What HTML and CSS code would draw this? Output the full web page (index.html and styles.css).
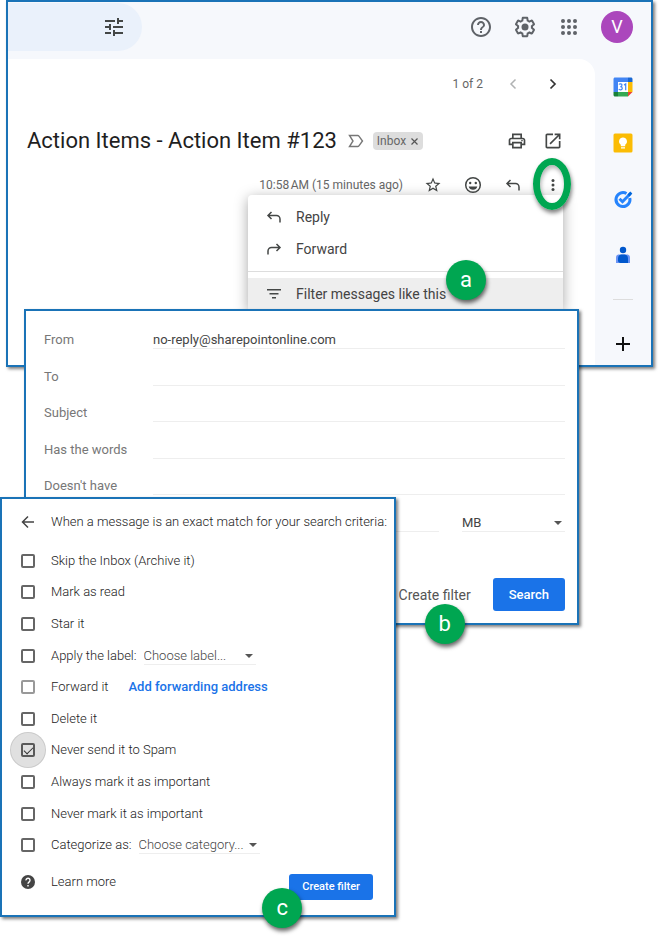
FILE: index.html
```html
<!DOCTYPE html>
<html lang="en">
<head>
<meta charset="UTF-8">
<meta name="viewport" content="width=device-width, initial-scale=1.0">
<title>Create a mail filter</title>
<link rel="stylesheet" href="styles.css">
</head>
<body>
<section class="panel mail">
    <header class="topbar">
        <div class="search">
            <button class="icon-button" aria-label="Search options">
                <svg width="24" height="24" viewBox="0 0 24 24" fill="#444746"><path d="M3 17v2h6v-2H3zM3 5v2h10V5H3zm10 16v-2h8v-2h-8v-2h-2v6h2zM7 9v2H3v2h4v2h2V9H7zm14 4v-2H11v2h10zm-6-4h2V7h4V5h-4V3h-2v6z"/></svg>
            </button>
        </div>
        <div class="tools">
            <button class="icon-button" aria-label="Support">
                <svg width="24" height="24" viewBox="0 0 24 24" fill="#5f6368"><path d="M11 18h2v-2h-2v2zm1-16C6.48 2 2 6.48 2 12s4.480 10 10 10 10-4.480 10-10S17.520 2 12 2zm0 18c-4.410 0-8-3.590-8-8s3.590-8 8-8 8 3.590 8 8-3.590 8-8 8zm0-14c-2.210 0-4 1.790-4 4h2c0-1.100.9-2 2-2s2 .9 2 2c0 2-3 1.750-3 5h2c0-2.250 3-2.500 3-5 0-2.210-1.790-4-4-4z"/></svg>
            </button>
            <button class="icon-button" aria-label="Settings">
                <svg width="24" height="24" viewBox="0 0 24 24" fill="#5f6368"><path d="M13.850 22.250h-3.700c-.74 0-1.360-.54-1.450-1.270l-.27-1.890c-.27-.14-.53-.29-.79-.46l-1.800.72c-.7.26-1.470-.03-1.810-.65L2.200 15.530c-.35-.66-.2-1.440.36-1.880l1.530-1.190c-.01-.15-.02-.3-.02-.46 0-.15.01-.31.02-.46l-1.520-1.190c-.59-.45-.74-1.260-.37-1.880l1.850-3.190c.34-.62 1.110-.9 1.790-.63l1.810.73c.26-.17.52-.32.78-.46l.27-1.910c.09-.7.71-1.250 1.440-1.250h3.700c.74 0 1.360.54 1.450 1.270l.27 1.890c.27.14.53.29.79.46l1.800-.72c.71-.26 1.480.03 1.820.65l1.840 3.180c.36.66.2 1.440-.36 1.880l-1.520 1.190c.01.15.02.3.02.46s-.01.31-.02.46l1.520 1.190c.56.45.72 1.230.37 1.860l-1.860 3.220c-.34.62-1.110.9-1.800.63l-1.800-.72c-.26.17-.52.32-.78.46l-.27 1.910c-.1.68-.72 1.220-1.460 1.220zm-3.230-2h2.760l.37-2.550.53-.22c.44-.18.88-.44 1.340-.78l.45-.34 2.380.96 1.380-2.400-2.030-1.580.07-.56c.03-.26.06-.51.06-.78s-.03-.53-.06-.78l-.07-.56 2.030-1.580-1.390-2.400-2.390.96-.45-.35c-.42-.32-.87-.58-1.330-.77l-.52-.22-.37-2.550h-2.760l-.37 2.550-.53.21c-.44.19-.88.44-1.340.79l-.45.33-2.380-.95-1.390 2.390 2.030 1.580-.07.56a7 7 0 0 0-.06.79c0 .26.02.53.06.78l.07.56-2.030 1.580 1.380 2.400 2.390-.96.45.35c.43.33.86.58 1.330.77l.53.22z"/><circle cx="12" cy="12" r="3.500"/></svg>
            </button>
            <button class="icon-button" aria-label="Apps">
                <svg width="24" height="24" viewBox="0 0 24 24" fill="#5f6368"><g id="dots"><circle cx="6" cy="6" r="2"/><circle cx="12" cy="6" r="2"/><circle cx="18" cy="6" r="2"/></g><use href="#dots" y="6"/><use href="#dots" y="12"/></svg>
            </button>
            <button class="avatar" aria-label="Account">V</button>
        </div>
    </header>
    <div class="mail-body">
        <main class="message">
            <div class="row pager">
                <span class="muted">1 of 2</span>
                <button class="icon-button wide" aria-label="Newer">
                    <svg width="16" height="16" viewBox="0 0 16 16" fill="none" stroke="#b0b2b3" stroke-width="1.500"><path d="M10.500 3.500 6 8l4.500 4.500"/></svg>
                </button>
                <button class="icon-button wide" aria-label="Older">
                    <svg width="16" height="16" viewBox="0 0 16 16" fill="none" stroke="#333" stroke-width="1.700"><path d="m5.500 3.500 4.500 4.500-4.500 4.500"/></svg>
                </button>
            </div>
            <div class="row subject">
                <h1>Action Items - Action Item #123</h1>
                <svg width="16" height="14" viewBox="0 0 16 14" fill="none" stroke="#777" stroke-width="1.400"><path d="M1.500 1.500h8.200c.5 0 .9.200 1.200.6L14.500 7l-3.600 4.900c-.3.4-.7.600-1.200.6H1.500L5 7z"/></svg>
                <span class="chip">Inbox <button aria-label="Remove label"><svg width="7" height="7" viewBox="0 0 7 7" stroke="#555" stroke-width="1.200"><path d="m.5.5 6 6m0-6-6 6"/></svg></button></span>
                <div class="subject-tools">
                    <button class="icon-button" aria-label="Print">
                        <svg width="20" height="20" viewBox="0 0 24 24" fill="#444746"><path d="M19 8h-1V3H6v5H5c-1.660 0-3 1.340-3 3v6h4v4h12v-4h4v-6c0-1.660-1.340-3-3-3zM8 5h8v3H8V5zm8 12v2H8v-4h8v2zm2-2v-2H6v2H4v-4c0-.55.45-1 1-1h14c.55 0 1 .45 1 1v4h-2z"/><circle cx="18" cy="11.500" r="1"/></svg>
                    </button>
                    <button class="icon-button" aria-label="Open in new window">
                        <svg width="20" height="20" viewBox="0 0 24 24" fill="#444746"><path d="M19 19H5V5h7V3H5c-1.110 0-2 .9-2 2v14c0 1.100.89 2 2 2h14c1.100 0 2-.9 2-2v-7h-2v7zM14 3v2h3.590l-9.830 9.830 1.410 1.410L19 6.410V10h2V3h-7z"/></svg>
                    </button>
                </div>
            </div>
            <div class="row actions">
                <span class="muted">10:58&#8239;AM (15 minutes ago)</span>
                <button class="icon-button wide" aria-label="Star">
                    <svg width="18" height="18" viewBox="0 0 24 24" fill="#444746"><path d="m22 9.240-7.190-.62L12 2 9.190 8.630 2 9.240l5.460 4.730L5.820 21 12 17.270 18.180 21l-1.630-7.030L22 9.240zM12 15.400l-3.760 2.270 1-4.280-3.320-2.880 4.380-.38L12 6.100l1.710 4.040 4.380.38-3.320 2.880 1 4.280L12 15.400z"/></svg>
                </button>
                <button class="icon-button wide" aria-label="Add reaction">
                    <svg width="20" height="20" viewBox="0 0 20 20" fill="#444746"><circle cx="10" cy="10" r="7.300" fill="none" stroke="#444746" stroke-width="1.500"/><circle cx="7.200" cy="8" r="1.200"/><circle cx="12.800" cy="8" r="1.200"/><path d="M5.700 11.500h8.600a4.500 4.500 0 0 1-8.600 0z"/></svg>
                </button>
                <button class="icon-button wide" aria-label="Reply">
                    <svg width="16" height="16" viewBox="0 0 16 16" fill="none" stroke="#444746" stroke-width="1.500"><path d="M5.500 3 2 6.500 5.500 10M2 6.500h8.500a3.500 3.500 0 0 1 3.500 3.500v3.500"/></svg>
                </button>
                <div class="more">
                    <button class="icon-button wide" aria-label="More">
                        <svg width="16" height="16" viewBox="0 0 16 16" fill="#444746"><circle cx="8" cy="3.500" r="1.500"/><circle cx="8" cy="8" r="1.500"/><circle cx="8" cy="12.500" r="1.500"/></svg>
                    </button>
                    <span class="ring"></span>
                </div>
            </div>
            <div class="menu">
                <button class="menu-item">
                    <svg width="16" height="16" viewBox="0 0 16 16" fill="none" stroke="#444746" stroke-width="1.500"><path d="M5.500 3 2 6.500 5.500 10M2 6.500h8.500a3.500 3.500 0 0 1 3.500 3.500v3.500"/></svg>
                    Reply
                </button>
                <button class="menu-item">
                    <svg width="16" height="16" viewBox="0 0 16 16" fill="none" stroke="#444746" stroke-width="1.500"><path d="M10.500 3 14 6.500 10.500 10M14 6.500H5.500A3.500 3.500 0 0 0 2 10v3.500"/></svg>
                    Forward
                </button>
                <hr>
                <button class="menu-item selected">
                    <svg width="16" height="16" viewBox="0 0 16 16" fill="none" stroke="#444746" stroke-width="1.500"><path d="M1 3.750h14M3.500 7.750h9M6 11.750h4"/></svg>
                    Filter messages like this
                </button>
                <span class="badge badge-a">a</span>
            </div>
        </main>
        <aside class="rail">
            <button class="icon-button" aria-label="Calendar">
                <svg width="20" height="20" viewBox="0 0 20 20"><path fill="#4285f4" d="M2 .5h13V5H5v10H.5V2C.5 1.200 1.200.5 2 .5z"/><path fill="#1967d2" d="M15 .5h3c.8 0 1.500.7 1.500 1.500v3H15z"/><path fill="#fbbc04" d="M15 5h4.500v10H15z"/><path fill="#34a853" d="M5 15h10v4.500H5z"/><path fill="#188038" d="M.5 15H5v4.500H2c-.8 0-1.500-.7-1.500-1.500z"/><path fill="#ea4335" d="M15 15h4.500L15 19.500z"/><path fill="#fff" d="M5 5h10v10H5z"/><path fill="none" stroke="#4285f4" stroke-width="1.200" d="M6 7.500c.6-1 3-1 3 .6 0 1.100-1 1.500-1.700 1.500.9 0 2 .5 2 1.700 0 1.800-2.700 2-3.500.7M11 8l1.700-1.100v6.300"/></svg>
            </button>
            <button class="icon-button" aria-label="Keep">
                <svg width="20" height="20" viewBox="0 0 20 20"><rect x=".5" y=".5" width="19" height="19" rx="1.500" fill="#fbbc04"/><path fill="#fff" d="M10 4.500a4 4 0 0 0-2.200 7.300V13.300h4.400v-1.500A4 4 0 0 0 10 4.500zM8 14.200h4v1.400H8z"/></svg>
            </button>
            <button class="icon-button" aria-label="Tasks">
                <svg width="20" height="20" viewBox="0 0 20 20" fill="none"><path stroke="#2684fc" stroke-width="3" d="M13.500 4.500A7 7 0 1 0 16.800 9"/><path stroke="#2684fc" stroke-width="3" d="m6.500 9.700 3 3 8-8.200"/><path fill="#0066da" d="m14.500 5.400 2.800-3 2 2-2.800 3z"/></svg>
            </button>
            <button class="icon-button" aria-label="Contacts">
                <svg width="20" height="20" viewBox="0 0 20 20"><circle cx="10" cy="5" r="3.200" fill="#0057cc"/><path fill="#6b94f4" d="M6 9.500h8c1.900 0 3 1.200 3 3V18H3v-5.500c0-1.800 1.100-3 3-3z"/><path fill="#0057cc" d="M9 9.500h2c2.500 0 4 1.500 4 4V18H7.500C6 18 5 17 5 15.500v-2c0-2.500 1.500-4 4-4z"/></svg>
            </button>
            <hr>
            <button class="icon-button add" aria-label="Get add-ons">
                <svg width="16" height="16" viewBox="0 0 16 16" stroke="#111" stroke-width="2"><path d="M8 1v14M1 8h14"/></svg>
            </button>
        </aside>
    </div>
</section>

<form class="panel criteria">
    <div class="fields">
        <div class="field"><label for="from">From</label><input type="text" id="from" value="no-reply@sharepointonline.com"></div>
        <div class="field"><label for="to">To</label><input type="text" id="to"></div>
        <div class="field"><label for="subject">Subject</label><input type="text" id="subject"></div>
        <div class="field"><label for="words">Has the words</label><input type="text" id="words"></div>
        <div class="field"><label for="without">Doesn't have</label><input type="text" id="without"></div>
        <div class="field size">
            <input type="text" aria-label="Size">
            <span class="dropdown unit"><select aria-label="Size unit"><option>MB</option></select></span>
        </div>
    </div>
    <div class="criteria-footer">
        <div class="marked">
            <button type="button" class="text-button">Create filter</button>
            <span class="badge badge-b">b</span>
        </div>
        <button type="button" class="primary">Search</button>
    </div>
</form>

<form class="panel options">
    <div class="options-head">
        <button type="button" class="icon-button" aria-label="Back">
            <svg width="14" height="14" viewBox="0 0 14 14" fill="none" stroke="#444" stroke-width="1.500"><path d="M7 1.500 1.500 7 7 12.500M1.500 7H13"/></svg>
        </button>
        <span>When a message is an exact match for your search criteria:</span>
    </div>
    <div class="checks">
        <div class="check"><input type="checkbox" id="skip"><label for="skip">Skip the Inbox (Archive it)</label></div>
        <div class="check"><input type="checkbox" id="read"><label for="read">Mark as read</label></div>
        <div class="check"><input type="checkbox" id="star"><label for="star">Star it</label></div>
        <div class="check">
            <input type="checkbox" id="apply"><label for="apply">Apply the label:</label>
            <span class="dropdown label-select"><select aria-label="Label"><option>Choose label...</option></select></span>
        </div>
        <div class="check">
            <input type="checkbox" id="forward" disabled><label for="forward">Forward it</label>
            <a href="#">Add forwarding address</a>
        </div>
        <div class="check"><input type="checkbox" id="delete"><label for="delete">Delete it</label></div>
        <div class="check active"><input type="checkbox" id="spam" checked><label for="spam">Never send it to Spam</label></div>
        <div class="check"><input type="checkbox" id="always"><label for="always">Always mark it as important</label></div>
        <div class="check"><input type="checkbox" id="never"><label for="never">Never mark it as important</label></div>
        <div class="check">
            <input type="checkbox" id="category"><label for="category">Categorize as:</label>
            <span class="dropdown category-select"><select aria-label="Category"><option>Choose category...</option></select></span>
        </div>
    </div>
    <div class="options-footer">
        <a class="learn" href="#">
            <svg width="14" height="14" viewBox="0 0 14 14"><circle cx="7" cy="7" r="7" fill="#444"/><path d="M5 5.400a2 2 0 1 1 3.200 1.500C7.400 7.500 7 7.900 7 8.800M7 10v1.600" fill="none" stroke="#fff" stroke-width="1.400"/></svg>
            Learn more
        </a>
        <div class="marked">
            <button type="button" class="primary small">Create filter</button>
            <span class="badge badge-c">c</span>
        </div>
    </div>
</form>
</body>
</html>
```
FILE: styles.css
```css
* {
    box-sizing: border-box;
}
body {
    margin: 0;
    padding-bottom: 19px;
    background-color: white;
    color: #444;
    font-family: Roboto, Arial, sans-serif;
    font-size: 13px;
    line-height: 18px;
}
button,
input,
select {
    margin: 0;
    padding: 0;
    border: none;
    background: none;
    color: inherit;
    font: inherit;
}
button {
    cursor: pointer;
}
hr {
    margin: 0;
    border: none;
    border-top: 1px solid #ddd;
}
svg {
    display: block;
    flex: none;
}

/* Stacked panels, each one laid over the end of the one before */
.panel {
    position: relative;
    isolation: isolate;
    border: 2px solid #1a73b7;
    background-color: white;
    box-shadow: 2px 2px 3px rgba(0,0,0,0.5);
}
.icon-button {
    display: flex;
    align-items: center;
    justify-content: center;
}
.wide {
    width: 40px;
}

/* Mail window */
.mail {
    margin: 0 7px 0 6px;
    background-color: #f6f8fc;
}
.topbar {
    display: flex;
    justify-content: space-between;
    padding: 1px 18px 8px 0;
}
.search {
    display: flex;
    justify-content: flex-end;
    width: 134px;
    height: 48px;
    padding-right: 16px;
    border-radius: 0 24px 24px 0;
    background-color: #eaf1fb;
}
.tools {
    display: flex;
    align-items: center;
    gap: 20px;
}
.avatar {
    width: 32px;
    height: 32px;
    border-radius: 50%;
    background-color: #ab47bc;
    color: white;
    font-size: 18px;
}
.mail-body {
    display: flex;
}
.message {
    position: relative;
    flex: 1;
    border-radius: 0 16px 0 0;
    background-color: white;
}
.row {
    display: flex;
    align-items: center;
    justify-content: flex-end;
    padding: 0 22px 0 19px;
}
.muted {
    margin-right: 10px;
    color: #666;
    font-size: 12px;
}
.pager {
    height: 50px;
}
.subject {
    height: 64px;
}
.subject h1 {
    margin: 0 11px 0 0;
    color: #1f1f1f;
    font-size: 22px;
    font-weight: 400;
    line-height: 28px;
}
.chip {
    display: flex;
    align-items: center;
    gap: 5px;
    margin-left: 9px;
    padding: 0 5px 0 4px;
    border-radius: 4px;
    background-color: #ddd;
    color: #666;
    font-size: 12px;
}
.subject-tools {
    display: flex;
    gap: 16px;
    margin-left: auto;
    padding-right: 10px;
}
.actions {
    height: 24px;
}
.more {
    position: relative;
}
.ring {
    position: absolute;
    z-index: 2;
    top: -19px;
    left: 0;
    width: 38px;
    height: 52px;
    border: 7px solid #00a651;
    border-radius: 50%;
    box-shadow: 1px 3px 4px rgba(0,0,0,0.5), inset 1px 3px 4px rgba(0,0,0,0.3);
    pointer-events: none;
}
.menu {
    position: absolute;
    z-index: 1;
    top: 136px;
    right: 32px;
    width: 315px;
    padding-top: 6px;
    border-radius: 4px;
    background-color: white;
    box-shadow: 0 3px 14px rgba(0,0,0,0.35);
}
.menu hr {
    margin: 6px 0;
}
.menu-item {
    display: flex;
    align-items: center;
    gap: 14px;
    width: 100%;
    height: 32px;
    padding-left: 18px;
    font-size: 14px;
}
.selected {
    background-color: #eee;
}
.rail {
    display: flex;
    flex-direction: column;
    width: 56px;
}
.rail .icon-button {
    height: 56px;
}
.rail hr {
    margin: 16px 18px 23px;
}
.rail .add {
    height: 42px;
}

/* Lettered step markers */
.marked {
    position: relative;
}
.badge {
    position: absolute;
    z-index: 2;
    width: 40px;
    height: 40px;
    border-radius: 50%;
    background-color: #00a651;
    box-shadow: 1px 3px 4px rgba(0,0,0,0.6);
    color: white;
    font-size: 22px;
    font-weight: 400;
    line-height: 40px;
    text-align: center;
}
.badge-a {
    top: 65px;
    left: 198px;
}
.badge-b {
    right: 6px;
    bottom: -33px;
}
.badge-c {
    top: 14px;
    left: -27px;
}

/* Search criteria */
.criteria {
    margin: -58px 81px 0 24px;
    padding: 11px 12px 12px 18px;
}
.fields {
    display: grid;
    grid-auto-rows: 1fr;
    height: 219px;
}
.field {
    display: grid;
    grid-template-columns: 109px 1fr;
    align-items: center;
    color: #777;
}
.field input,
.dropdown select {
    width: 100%;
    height: 18px;
    border-bottom: 1px solid #eee;
    outline: none;
}
.field input {
    color: #444;
}
.size {
    display: flex;
    gap: 23px;
    padding-left: 109px;
}
.dropdown {
    display: flex;
    position: relative;
}
.dropdown select {
    appearance: none;
}
.dropdown::after {
    content: "";
    position: absolute;
    top: 7px;
    right: 3px;
    border: 4px solid transparent;
    border-top-color: #555;
    border-bottom: none;
    pointer-events: none;
}
.unit {
    flex: 0 0 103px;
    color: #444;
}
.criteria-footer {
    display: flex;
    justify-content: flex-end;
    gap: 22px;
    margin-top: 37px;
}
.text-button {
    height: 33px;
    color: #555;
    font-size: 14px;
}
.primary {
    height: 33px;
    padding: 0 16px;
    border-radius: 3px;
    background-color: #1a73e8;
    color: white;
    font-weight: 500;
}
.small {
    height: 26px;
    padding: 0 13px;
    font-size: 11px;
}

/* Filter actions */
.options {
    width: 60%;
    margin-top: -128px;
    padding: 0 21px 12px 19px;
    color: #222;
    font-weight: 300;
}
.options-head {
    display: flex;
    align-items: center;
    gap: 16px;
    height: 46px;
    white-space: nowrap;
}
.checks {
    display: grid;
    grid-auto-rows: 1fr;
    height: 316px;
}
.check {
    display: flex;
    align-items: center;
}
.check input {
    appearance: none;
    position: relative;
    width: 14px;
    height: 14px;
    margin-right: 16px;
    border: 2px solid #666;
    border-radius: 2px;
}
.check input:disabled {
    border-color: #999;
}
.check input:checked::after {
    content: "";
    position: absolute;
    top: 0;
    left: 3px;
    width: 4px;
    height: 8px;
    border: solid #333;
    border-width: 0 1px 1px 0;
    transform: rotate(45deg);
}
.active input::before {
    content: "";
    position: absolute;
    inset: -13px;
    border: 1px solid rgba(0,0,0,0.1);
    border-radius: 50%;
    background-color: rgba(0,0,0,0.12);
}
.check a {
    margin-left: 20px;
    color: #1a73e8;
    font-weight: 500;
    text-decoration: none;
}
.check .dropdown {
    margin-left: 7px;
    color: #444;
}
.label-select {
    width: 112px;
}
.category-select {
    width: 121px;
}
.options-footer {
    display: flex;
    align-items: flex-start;
    justify-content: space-between;
}
.learn {
    display: flex;
    align-items: center;
    gap: 16px;
    height: 42px;
    color: #222;
    text-decoration: none;
}
.options-footer .marked {
    margin-top: 13px;
}
```
